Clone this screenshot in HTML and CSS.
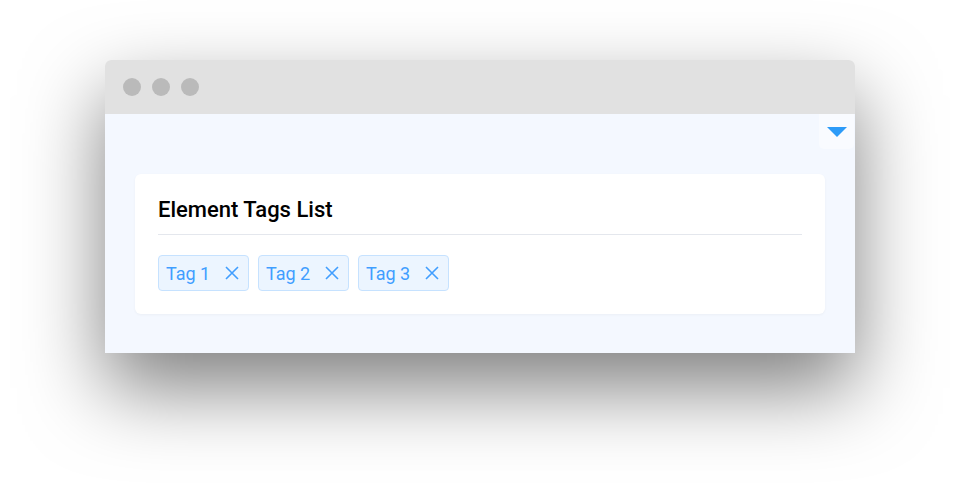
FILE: index.html
```html
<!DOCTYPE html>
<html>
<head>
<meta charset="utf-8">
<link rel="stylesheet" href="styles.css">
</head>
<body>
<div class="stage">
  <div class="window">
    <div class="titlebar">
      <span class="dot"></span><span class="dot"></span><span class="dot"></span>
    </div>
    <div class="content">
      <div class="toolbar">
        <button class="drop"><svg width="20" height="10" viewBox="0 0 20 10"><path d="M0 0H20L10 10Z" fill="#2d9bf8"/></svg></button>
      </div>
      <div class="card">
        <h2 class="title">Element Tags List</h2>
        <div class="tags">
          <span class="tag">Tag 1<svg class="x" width="14" height="14" viewBox="0 0 14 14"><path d="M1 1L13 13M13 1L1 13" stroke="#409eff" stroke-width="1.6"/></svg></span>
          <span class="tag">Tag 2<svg class="x" width="14" height="14" viewBox="0 0 14 14"><path d="M1 1L13 13M13 1L1 13" stroke="#409eff" stroke-width="1.6"/></svg></span>
          <span class="tag">Tag 3<svg class="x" width="14" height="14" viewBox="0 0 14 14"><path d="M1 1L13 13M13 1L1 13" stroke="#409eff" stroke-width="1.6"/></svg></span>
        </div>
      </div>
    </div>
  </div>
</div>
</body>
</html>
```

FILE: styles.css
```css
html, body {
  margin: 0;
  padding: 0;
  background: #ffffff;
  font-family: Roboto, "Liberation Sans", sans-serif;
}
.stage {
  width: 960px;
  height: 504px;
  padding: 60px 0 0 105px;
  box-sizing: border-box;
}
.window {
  width: 750px;
  border-radius: 6px 6px 0 0;
  box-shadow: 0 35px 80px rgba(0, 0, 0, 0.5);
  overflow: hidden;
}
.titlebar {
  height: 54px;
  background: #e1e1e1;
  display: flex;
  align-items: center;
  padding-left: 18px;
  gap: 11px;
}
.dot {
  width: 18px;
  height: 18px;
  border-radius: 50%;
  background: #bababa;
}
.content {
  background: #f4f8ff;
  height: 239px;
  padding: 0 1px 0 30px;
  box-sizing: border-box;
}
.toolbar {
  display: flex;
  justify-content: flex-end;
  height: 60px;
}
.drop {
  width: 35px;
  height: 35px;
  border: none;
  background: #f9fbff;
  border-radius: 0 0 5px 5px;
  padding: 0;
  display: flex;
  align-items: center;
  justify-content: center;
}
.card {
  width: 690px;
  background: #ffffff;
  border-radius: 6px;
  padding: 21px 23px 23px;
  box-sizing: border-box;
  box-shadow: 0 1px 3px rgba(0, 0, 0, 0.04);
}
.title {
  margin: 0;
  font-size: 22px;
  font-weight: 500;
  color: #000;
  line-height: 30px;
  padding-bottom: 9px;
  border-bottom: 1px solid #e4e7ed;
}
.tags {
  display: flex;
  gap: 9px;
  margin-top: 20px;
}
.tag {
  display: inline-flex;
  align-items: center;
  height: 36px;
  box-sizing: border-box;
  padding: 0 9px 0 7px;
  width: 91px;
  background: #ecf5ff;
  border: 1px solid #c6e2ff;
  border-radius: 4px;
  color: #409eff;
  font-size: 18px;
}
.x {
  margin-left: auto;
}
```
